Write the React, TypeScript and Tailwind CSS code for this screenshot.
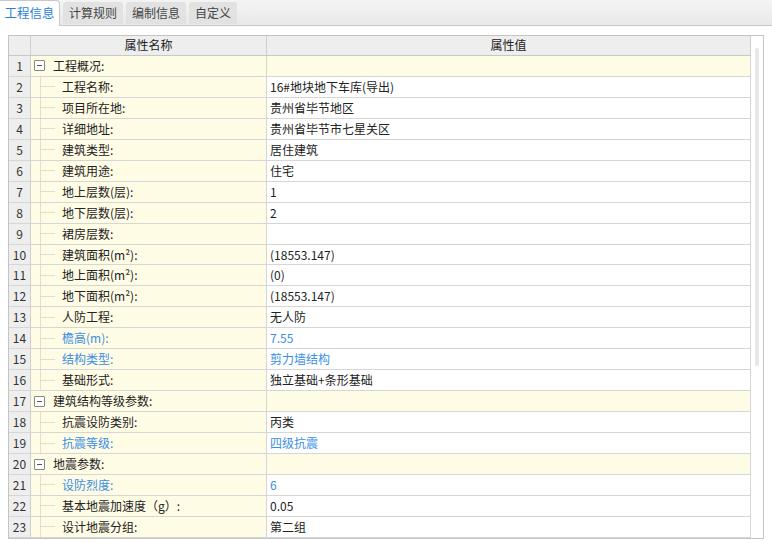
import React from 'react';

type Row = { name: string; value?: string; group?: boolean; blue?: boolean };

const rows: Row[] = [
  { name: '工程概况:', group: true },
  { name: '工程名称:', value: '16#地块地下车库(导出)' },
  { name: '项目所在地:', value: '贵州省毕节地区' },
  { name: '详细地址:', value: '贵州省毕节市七星关区' },
  { name: '建筑类型:', value: '居住建筑' },
  { name: '建筑用途:', value: '住宅' },
  { name: '地上层数(层):', value: '1' },
  { name: '地下层数(层):', value: '2' },
  { name: '裙房层数:', value: '' },
  { name: '建筑面积(m²):', value: '(18553.147)' },
  { name: '地上面积(m²):', value: '(0)' },
  { name: '地下面积(m²):', value: '(18553.147)' },
  { name: '人防工程:', value: '无人防' },
  { name: '檐高(m):', value: '7.55', blue: true },
  { name: '结构类型:', value: '剪力墙结构', blue: true },
  { name: '基础形式:', value: '独立基础+条形基础' },
  { name: '建筑结构等级参数:', group: true },
  { name: '抗震设防类别:', value: '丙类' },
  { name: '抗震等级:', value: '四级抗震', blue: true },
  { name: '地震参数:', group: true },
  { name: '设防烈度:', value: '6', blue: true },
  { name: '基本地震加速度（g）:', value: '0.05' },
  { name: '设计地震分组:', value: '第二组' },
];

const tabs = ['工程信息', '计算规则', '编制信息', '自定义'];

export default function App() {
  return (
    <div
      className="w-[772px] h-[543px] bg-white text-[12px] text-[#222] overflow-hidden"
      style={{ fontFamily: '"Noto Sans CJK SC", "Noto Sans", sans-serif' }}
    >
      {/* 标签栏 */}
      <div className="h-[26px] flex items-end gap-[3px] bg-gradient-to-b from-[#f4f4f4] to-[#e9e9e9] border-b border-[#c8c8c8]">
        {tabs.map((t, i) =>
          i === 0 ? (
            <div
              key={t}
              className="h-[26px] -mb-px w-[60px] flex items-center justify-center bg-white border-r border-t border-[#c8c8c8] rounded-tr-[4px] text-[#2b7fd8] text-[12.5px]"
            >
              {t}
            </div>
          ) : (
            <div
              key={t}
              className="h-[22px] mb-px px-[6px] flex items-center bg-[#e2e2e2] rounded-t-[3px] text-[#444] text-[12px]"
            >
              {t}
            </div>
          )
        )}
      </div>

      {/* 表格 */}
      <div className="ml-[8px] mt-[9px] w-[756px] h-[504px] border border-[#c4c4c4] flex">
        <div className="w-[742px] flex flex-col">
          <div className="flex h-[20px] bg-[#eeeeee] border-b border-[#c8c8c8]">
            <div className="w-[22px] border-r border-[#cfcfcf]" />
            <div className="w-[236px] border-r border-[#cfcfcf] flex items-center justify-center">属性名称</div>
            <div className="w-[484px] border-r border-[#cfcfcf] flex items-center justify-center">属性值</div>
          </div>
          {rows.map((r, i) => (
            <div key={i} className="flex h-[21px] border-b border-[#d6d6d6]">
              <div className="w-[22px] bg-[#eeeeee] border-r border-[#cfcfcf] flex items-center justify-center text-[#333]">
                {i + 1}
              </div>
              <div className="w-[236px] bg-[#fffce6] border-r border-[#d6d6d6] flex items-center relative">
                {r.group ? (
                  <>
                    <span className="ml-[3px] w-[11px] h-[11px] border border-[#888] rounded-[1px] flex items-center justify-center bg-white">
                      <span className="w-[5px] h-px bg-[#555]" />
                    </span>
                    <span className="ml-[8px]">{r.name}</span>
                  </>
                ) : (
                  <>
                    <span className="absolute left-[9px] top-0 bottom-0 w-px bg-[#e2dfcc]" />
                    <span className="ml-[10px] w-[14px] h-px bg-[#e2dfcc]" />
                    <span className={`ml-[7px] ${r.blue ? 'text-[#3a8ee6]' : ''}`}>{r.name}</span>
                  </>
                )}
              </div>
              <div
                className={`w-[484px] border-r border-[#d6d6d6] flex items-center pl-[3px] ${
                  r.group ? 'bg-[#fffce6]' : 'bg-white'
                } ${r.blue ? 'text-[#3a8ee6]' : ''}`}
              >
                {r.value}
              </div>
            </div>
          ))}
        </div>
        {/* 滚动条 */}
        <div className="w-[12px] bg-white flex justify-center pt-[12px]">
          <div className="w-[4px] h-[318px] bg-[#e8e8e8] rounded-[2px]" />
        </div>
      </div>
    </div>
  );
}
